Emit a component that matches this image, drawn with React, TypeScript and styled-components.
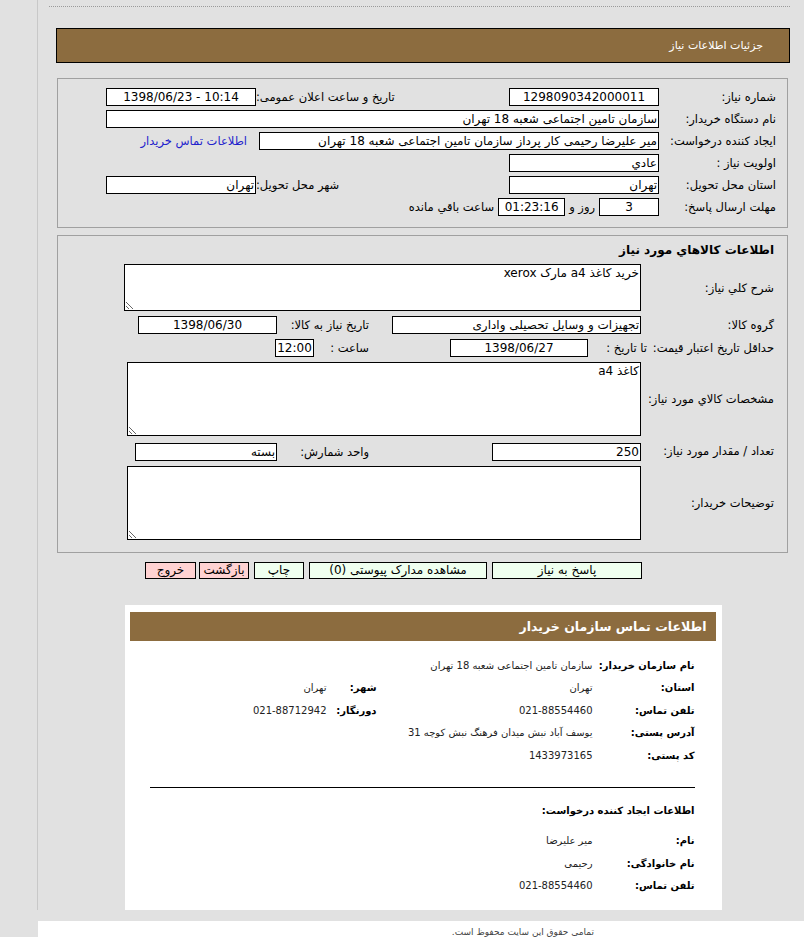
import React from 'react';
import styled, {createGlobalStyle} from 'styled-components';

const GlobalStyle = createGlobalStyle`
  html, body {
    margin: 0;
    padding: 0;
    background: #e1e1e1;
  }
  body {
    font-family: "DejaVu Sans", Tahoma, sans-serif;
    font-size: 11.5px;
    color: #000;
  }
`

const Shell = styled.div`
  margin-left: 37px;
  border-left: 1px solid #c8c8c8;
  padding: 6px 14px 0 18px;
`

const TopRule = styled.div`
  margin: 0 0 21px -7px;
  border-top: 1px dotted #9a9a9a;
`

const PageTitle = styled.div`
  direction: rtl;
  height: 33px;
  line-height: 33px;
  background: #8c6c3f;
  border: 1px solid #000;
  color: #fff;
  font-size: 11px;
  padding-right: 26px;
`

const Section = styled.div<{ $top: number }>`
  direction: rtl;
  margin: ${p => p.$top}px 2px 0 1px;
  border: 1px solid #a0a0a0;
`

/* ---------- first block ---------- */

const MainGrid = styled.div`
  display: grid;
  grid-template-columns: 117px 153px 250px 150px;
  grid-auto-rows: 22px;
  align-items: center;
  padding: 7px 11px 9px 0;
`

const Label = styled.div<{ $left?: boolean }>`
  white-space: nowrap;
  text-align: ${p => (p.$left ? 'left' : 'right')};
`

const Field = styled.input<{ $w?: number; $center?: boolean; $span?: number }>`
  box-sizing: border-box;
  width: ${p => (p.$w ? `${p.$w}px` : '100%')};
  height: 18px;
  margin: 0;
  padding: 0 1px;
  border: 1px solid #000;
  background: #fff;
  font: inherit;
  font-size: 12px;
  color: #000;
  direction: ${p => (p.$center ? 'ltr' : 'rtl')};
  text-align: ${p => (p.$center ? 'center' : 'right')};
  outline: none;
  ${p => (p.$span ? `grid-column: span ${p.$span};` : '')}
`

const Span = styled.div<{ $span: number }>`
  grid-column: span ${p => p.$span};
  display: flex;
  align-items: center;
  gap: 4px;
`

const ContactLink = styled.a`
  color: #2222cc;
  text-decoration: none;
  padding-right: 9px;
  white-space: nowrap;
`

/* ---------- goods block ---------- */

const GoodsGrid = styled.div`
  display: grid;
  grid-template-columns: 133px 517px;
  row-gap: 5px;
  align-items: center;
  padding: 6px 13px 12px 0;
`

const GoodsHeading = styled.div`
  grid-column: span 2;
  font-weight: bold;
  font-size: 12px;
  line-height: 16px;
  margin-bottom: 1px;
`

const Memo = styled.textarea<{ $w: number; $h: number }>`
  box-sizing: border-box;
  width: ${p => p.$w}px;
  height: ${p => p.$h}px;
  margin: 0;
  padding: 1px 1px;
  border: 1px solid #000;
  background: #fff;
  font: inherit;
  font-size: 12px;
  direction: rtl;
  resize: both;
  outline: none;
`

const SubRow = styled.div<{ $mt?: number }>`
  display: grid;
  grid-template-columns: 272px 92px 1fr;
  align-items: center;
  margin-top: ${p => p.$mt || 0}px;
`

const SubLabel = styled.div`
  white-space: nowrap;
`

const Inline = styled.div<{ $gap: number; $span?: number; $shift?: number }>`
  display: flex;
  align-items: center;
  gap: ${p => p.$gap}px;
  margin-right: ${p => p.$shift || 0}px;
  ${p => (p.$span ? `grid-column: span ${p.$span};` : '')}
`

const FixedText = styled.span<{ $w: number }>`
  display: inline-block;
  width: ${p => p.$w}px;
  white-space: nowrap;
`

/* ---------- buttons ---------- */

const ButtonBar = styled.div`
  direction: rtl;
  display: flex;
  gap: 5px;
  padding-right: 148px;
  margin-top: 9px;
`

const ActionButton = styled.button<{ $w: number; $tone: 'green' | 'pink' }>`
  box-sizing: border-box;
  width: ${p => p.$w}px;
  height: 17px;
  margin: 0;
  padding: 0;
  border: 1px solid #000;
  background: ${p => (p.$tone === 'green' ? '#efffef' : '#ffd2d2')};
  font: inherit;
  font-size: 12px;
  line-height: 15px;
  color: #000;
  cursor: pointer;

  &:last-child {
    margin-right: -2px;
  }
`

/* ---------- contact panel ---------- */

const Panel = styled.div`
  direction: rtl;
  width: 597px;
  box-sizing: border-box;
  margin: 26px auto 0;
  background: #fff;
  padding: 7px 6px 13px 5px;
`

const PanelTitle = styled.div`
  height: 29px;
  line-height: 29px;
  background: #8c6c3f;
  color: #fff;
  font-weight: bold;
  font-size: 12.5px;
  padding-right: 9px;
`

const InfoGrid = styled.div<{ $mt: number }>`
  display: grid;
  grid-template-columns: 102px 216px 50px 1fr;
  grid-auto-rows: 22.5px;
  align-items: center;
  padding-right: 21px;
  margin-top: ${p => p.$mt}px;
`

const InfoLabel = styled.div`
  font-weight: bold;
  font-size: 10px;
  white-space: nowrap;
`

const InfoValue = styled.div<{ $span?: number }>`
  font-size: 10px;
  color: #222;
  white-space: nowrap;
  ${p => (p.$span ? `grid-column: span ${p.$span};` : '')}
`

const Divider = styled.div`
  margin: 20px 21px 0 20px;
  border-top: 1px solid #000;
`

const PanelSubheading = styled.div`
  font-weight: bold;
  font-size: 10px;
  padding-right: 21px;
  margin-top: 17px;
`

const Footer = styled.div`
  margin: 11px 0 0 38px;
  background: #fff;
  height: 20px;
  direction: rtl;
  font-size: 9px;
  color: #444;
  padding: 6px 210px 0 0;
`

export default function App() {
  return (
    <>
      <GlobalStyle/>
      <Shell>
        <TopRule/>
        <PageTitle>جزئیات اطلاعات نیاز</PageTitle>

        <Section $top={15}>
          <MainGrid>
            <Label>شماره نیاز:</Label>
            <Field readOnly $w={150} $center value="1298090342000011"/>
            <Label $left>تاریخ و ساعت اعلان عمومی:</Label>
            <Field readOnly $w={150} $center value="1398/06/23 - 10:14"/>

            <Label>نام دستگاه خریدار:</Label>
            <Field readOnly $span={3} value="سازمان تامین اجتماعی شعبه 18 تهران"/>

            <Label>ایجاد کننده درخواست:</Label>
            <Span $span={2}>
              <Field readOnly $w={400} value="میر علیرضا رحیمی کار پرداز سازمان تامین اجتماعی شعبه 18 تهران"/>
            </Span>
            <ContactLink href="#">اطلاعات تماس خریدار</ContactLink>

            <Label>اولویت نیاز :</Label>
            <Field readOnly $w={150} value="عادي"/>
            <div/>
            <div/>

            <Label>استان محل تحویل:</Label>
            <Field readOnly $w={150} value="تهران"/>
            <Label $left>شهر محل تحویل:</Label>
            <Field readOnly $w={150} value="تهران"/>

            <Label>مهلت ارسال پاسخ:</Label>
            <Span $span={3}>
              <Field readOnly $w={60} $center value="3"/>
              <span>روز و</span>
              <Field readOnly $w={67} $center value="01:23:16"/>
              <span>ساعت باقي مانده</span>
            </Span>
          </MainGrid>
        </Section>

        <Section $top={7}>
          <GoodsGrid>
            <GoodsHeading>اطلاعات كالاهاي مورد نياز</GoodsHeading>

            <Label>شرح کلي نياز:</Label>
            <Memo readOnly $w={517} $h={47} value="خرید کاغذ a4 مارک xerox"/>

            <Label>گروه کالا:</Label>
            <SubRow>
              <Field readOnly $w={249} value="تجهیزات و وسایل تحصیلی واداری"/>
              <SubLabel>تاریخ نیاز به کالا:</SubLabel>
              <Field readOnly $w={139} $center value="1398/06/30"/>
            </SubRow>

            <Label>حداقل تاریخ اعتبار قیمت:</Label>
            <SubRow>
              <Inline $gap={7} $shift={-6}>
                <FixedText $w={52}>تا تاریخ :</FixedText>
                <Field readOnly $w={138} $center value="1398/06/27"/>
              </Inline>
              <Inline $gap={0} $span={2}>
                <FixedText $w={55}>ساعت :</FixedText>
                <Field readOnly $w={39} $center value="12:00"/>
              </Inline>
            </SubRow>

            <Label>مشخصات کالاي مورد نياز:</Label>
            <Memo readOnly $w={514} $h={74} value="کاغذ a4"/>

            <Label>تعداد / مقدار مورد نیاز:</Label>
            <SubRow $mt={2}>
              <Field readOnly $w={149} value="250"/>
              <SubLabel>واحد شمارش:</SubLabel>
              <Field readOnly $w={142} value="بسته"/>
            </SubRow>

            <Label>توضیحات خریدار:</Label>
            <Memo readOnly $w={514} $h={74} value=""/>
          </GoodsGrid>
        </Section>

        <ButtonBar>
          <ActionButton $w={150} $tone="green">پاسخ به نیاز</ActionButton>
          <ActionButton $w={178} $tone="green">مشاهده مدارک پیوستی (0)</ActionButton>
          <ActionButton $w={50} $tone="green">چاپ</ActionButton>
          <ActionButton $w={50} $tone="pink">بازگشت</ActionButton>
          <ActionButton $w={51} $tone="pink">خروج</ActionButton>
        </ButtonBar>

        <Panel>
          <PanelTitle>اطلاعات تماس سازمان خریدار</PanelTitle>
          <InfoGrid $mt={13}>
            <InfoLabel>نام سازمان خریدار:</InfoLabel>
            <InfoValue $span={3}>سازمان تامین اجتماعی شعبه 18 تهران</InfoValue>

            <InfoLabel>استان:</InfoLabel>
            <InfoValue>تهران</InfoValue>
            <InfoLabel>شهر:</InfoLabel>
            <InfoValue>تهران</InfoValue>

            <InfoLabel>تلفن تماس:</InfoLabel>
            <InfoValue>021-88554460</InfoValue>
            <InfoLabel>دورنگار:</InfoLabel>
            <InfoValue>021-88712942</InfoValue>

            <InfoLabel>آدرس پستی:</InfoLabel>
            <InfoValue $span={3}>یوسف آباد نبش میدان فرهنگ نبش کوچه 31</InfoValue>

            <InfoLabel>کد پستی:</InfoLabel>
            <InfoValue $span={3}>1433973165</InfoValue>
          </InfoGrid>

          <Divider/>
          <PanelSubheading>اطلاعات ایجاد کننده درخواست:</PanelSubheading>

          <InfoGrid $mt={14}>
            <InfoLabel>نام:</InfoLabel>
            <InfoValue $span={3}>میر علیرضا</InfoValue>

            <InfoLabel>نام خانوادگی:</InfoLabel>
            <InfoValue $span={3}>رحیمی</InfoValue>

            <InfoLabel>تلفن تماس:</InfoLabel>
            <InfoValue $span={3}>021-88554460</InfoValue>
          </InfoGrid>
        </Panel>
      </Shell>
      <Footer>تمامی حقوق این سایت محفوظ است.</Footer>
    </>
  );
}
